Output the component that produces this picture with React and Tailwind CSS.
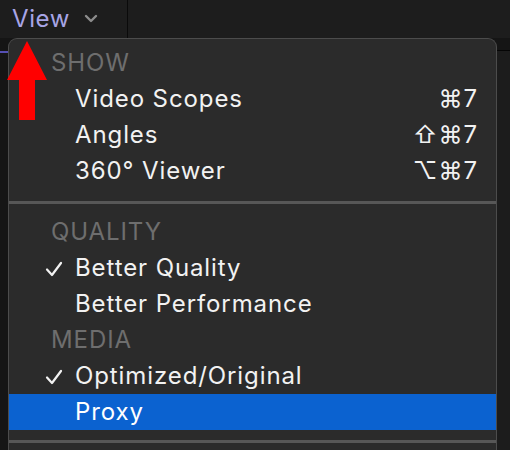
import React from 'react';

const font = { fontFamily: 'Inter, "Noto Sans", "DejaVu Sans", sans-serif' };

function Header({ children }) {
  return (
    <div className="h-[36px] flex items-center pl-[42px] text-[24px] tracking-[0.9px] text-[#6e6e6e]">{children}</div>
  );
}

function Item({ label, shortcut, checked, active }) {
  return (
    <div
      className={`h-[36px] flex items-center pr-[18px] text-[24px] tracking-[0.9px] ${
        active ? 'bg-[#0b62d0] text-white' : 'text-[#f2f2f2]'
      }`}
    >
      <div className="w-[66px] flex justify-end pr-[12px]">
        {checked && (
          <svg width="18" height="16" viewBox="0 0 18 16" className="mt-[2px]">
            <path d="M2 8.5 L7 14 L16 2" fill="none" stroke="#f2f2f2" strokeWidth="2.2" strokeLinecap="round" strokeLinejoin="round" />
          </svg>
        )}
      </div>
      <span className="flex-1">{label}</span>
      {shortcut && <span className="tracking-[1px]">{shortcut}</span>}
    </div>
  );
}

function Separator({ top, bottom }) {
  return (
    <div className={`${top} ${bottom}`}>
      <div className="h-[3px] bg-[#575757]" />
    </div>
  );
}

export default function App() {
  return (
    <div className="relative w-[510px] h-[450px] overflow-hidden bg-[#151515]" style={font}>
      {/* top bar */}
      <div className="h-[38px] flex bg-[#1d1d1d]">
        <div className="w-[128px] flex items-center pl-[12px] gap-[14px] border-r border-[#0a0a0a]">
          <span className="text-[24px] tracking-[0.6px] text-[#a8a5e6]">View</span>
          <svg width="14" height="10" viewBox="0 0 14 10">
            <path d="M2 2 L7 7 L12 2" fill="none" stroke="#8c8c8c" strokeWidth="2.4" strokeLinecap="round" strokeLinejoin="round" />
          </svg>
        </div>
        <div className="flex-1" />
      </div>

      <div className="absolute left-0 top-[51px] w-[8px] h-[2px] bg-[#5650b4]" />
      <div className="absolute right-0 top-[50px] w-[13px] h-[1px] bg-[#050505]" />
      <div className="absolute right-0 top-[51px] w-[13px] h-[400px] bg-[#1c1c1c]" />

      {/* menu */}
      <div className="absolute left-[8px] top-[38px] w-[489px] h-[430px] rounded-t-[9px] bg-[#2b2b2b] border-t border-x border-[#4c4c4c] pt-[6px]">
        <Header>SHOW</Header>
        <Item label="Video Scopes" shortcut="⌘7" />
        <Item label="Angles" shortcut="⇧⌘7" />
        <Item label="360° Viewer" shortcut="⌥⌘7" />
        <Separator top="pt-[12px]" bottom="pb-[10px]" />
        <Header>QUALITY</Header>
        <Item label="Better Quality" checked />
        <Item label="Better Performance" />
        <Header>MEDIA</Header>
        <Item label="Optimized/Original" checked />
        <Item label="Proxy" active />
        <Separator top="pt-[10px]" bottom="pb-[10px]" />
      </div>

      {/* red arrow */}
      <svg className="absolute left-0 top-0" width="60" height="130" viewBox="0 0 60 130">
        <polygon points="27,41 47,80 35,80 35,120 19,120 19,80 7,80" fill="#ff0000" />
      </svg>
    </div>
  );
}
